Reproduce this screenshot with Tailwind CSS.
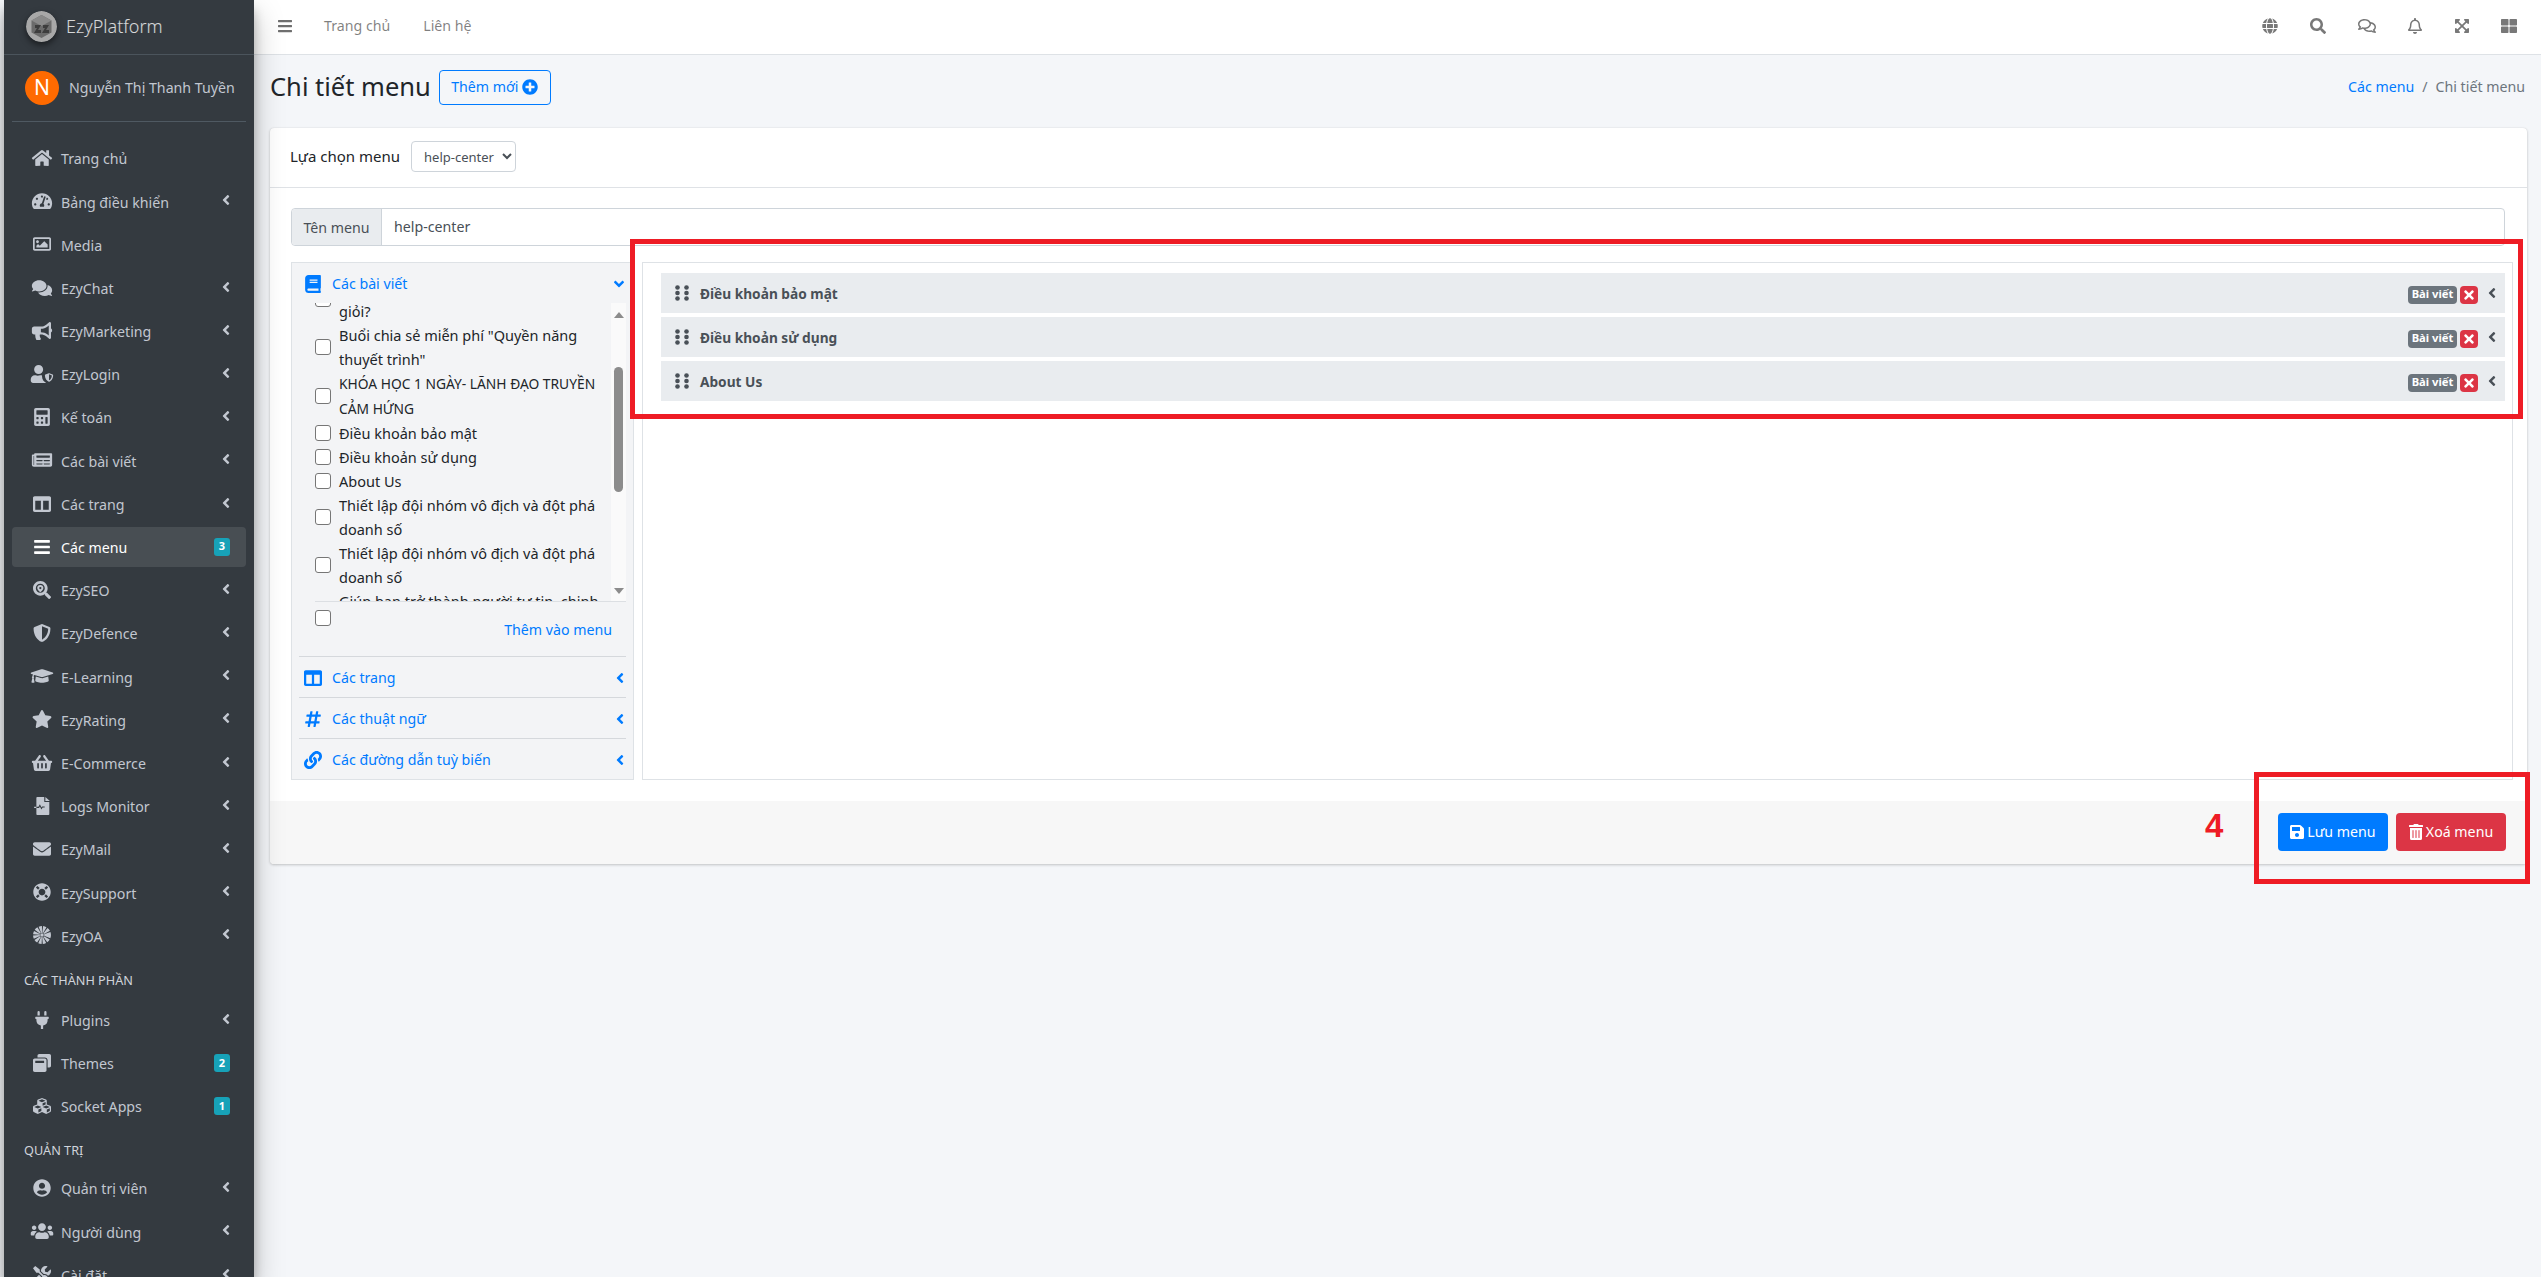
<!DOCTYPE html>
<html lang="vi">
<head>
<meta charset="UTF-8">
<title>Chi tiết menu</title>
<script src="https://cdn.jsdelivr.net/npm/@tailwindcss/browser@4"></script>
</head>
<body class="relative h-[1277px] overflow-hidden bg-[#f4f6f9] font-['Noto_Sans',sans-serif] text-[14.2px] text-[#212529]">

<!-- icon sprites -->
<svg class="hidden" xmlns="http://www.w3.org/2000/svg">
<symbol id="home" viewBox="0 0 576 512"><path d="M280.37 148.26L96 300.11V464a16 16 0 0 0 16 16l112.06-.29a16 16 0 0 0 15.92-16V368a16 16 0 0 1 16-16h64a16 16 0 0 1 16 16v95.64a16 16 0 0 0 16 16.05L464 480a16 16 0 0 0 16-16V300L295.67 148.26a12.19 12.19 0 0 0-15.3 0zM571.6 251.47L488 182.56V44.05a12 12 0 0 0-12-12h-56a12 12 0 0 0-12 12v72.61L318.47 43a48 48 0 0 0-61 0L4.34 251.47a12 12 0 0 0-1.6 16.9l25.5 31A12 12 0 0 0 45.15 301l235.22-193.74a12.19 12.19 0 0 1 15.3 0L530.9 301a12 12 0 0 0 16.9-1.6l25.5-31a12 12 0 0 0-1.7-16.93z"/></symbol>
<symbol id="bars" viewBox="0 0 448 512"><path d="M16 132h416c8.837 0 16-7.163 16-16V76c0-8.837-7.163-16-16-16H16C7.163 60 0 67.163 0 76v40c0 8.837 7.163 16 16 16zm0 160h416c8.837 0 16-7.163 16-16v-40c0-8.837-7.163-16-16-16H16c-8.837 0-16 7.163-16 16v40c0 8.837 7.163 16 16 16zm0 160h416c8.837 0 16-7.163 16-16v-40c0-8.837-7.163-16-16-16H16c-8.837 0-16 7.163-16 16v40c0 8.837 7.163 16 16 16z"/></symbol>
<symbol id="left" viewBox="0 0 256 512"><path d="M31.7 239l136-136c9.4-9.4 24.6-9.4 33.9 0l22.6 22.6c9.4 9.4 9.4 24.6 0 33.9L127.9 256l96.4 96.4c9.4 9.4 9.4 24.6 0 33.9L201.7 409c-9.4 9.4-24.6 9.4-33.9 0l-136-136c-9.5-9.4-9.5-24.6-.1-34z"/></symbol>
<symbol id="down" viewBox="0 0 320 512"><path d="M143 352.3L7 216.3c-9.4-9.4-9.4-24.6 0-33.9l22.6-22.6c9.4-9.4 24.6-9.4 33.9 0l96.4 96.4 96.4-96.4c9.4-9.4 24.6-9.4 33.9 0l22.6 22.6c9.4 9.4 9.4 24.6 0 33.9l-136 136c-9.2 9.4-24.4 9.4-33.8 0z"/></symbol>
<symbol id="search" viewBox="0 0 512 512"><path d="M505 442.7L405.3 343c-4.5-4.5-10.6-7-17-7H372c27.6-35.3 44-79.7 44-128C416 93.1 322.9 0 208 0S0 93.1 0 208s93.1 208 208 208c48.3 0 92.7-16.4 128-44v16.3c0 6.4 2.5 12.5 7 17l99.7 99.7c9.4 9.4 24.6 9.4 33.9 0l28.3-28.3c9.4-9.4 9.4-24.6.1-34zM208 336c-70.7 0-128-57.2-128-128 0-70.7 57.2-128 128-128 70.7 0 128 57.2 128 128 0 70.7-57.2 128-128 128z"/></symbol>
<symbol id="seo" viewBox="0 0 512 512"><path d="M505 442.7L405.3 343c-4.5-4.5-10.6-7-17-7H372c27.6-35.3 44-79.7 44-128C416 93.1 322.9 0 208 0S0 93.1 0 208s93.1 208 208 208c48.3 0 92.7-16.4 128-44v16.3c0 6.4 2.5 12.5 7 17l99.7 99.7c9.4 9.4 24.6 9.4 33.9 0l28.3-28.3c9.4-9.4 9.4-24.6.1-34zM208 336c-70.7 0-128-57.2-128-128 0-70.7 57.2-128 128-128 70.7 0 128 57.2 128 128 0 70.7-57.2 128-128 128z"/><path d="M208 112c-50 0-88 38-88 84 0 40 60 100 88 124 28-24 88-84 88-124 0-46-38-84-88-84zm0 120a32 32 0 1 1 0-64 32 32 0 0 1 0 64z"/></symbol>
<symbol id="plus" viewBox="0 0 512 512"><path d="M256 8C119 8 8 119 8 256s111 248 248 248 248-111 248-248S393 8 256 8zm144 276c0 6.6-5.4 12-12 12h-92v92c0 6.6-5.4 12-12 12h-56c-6.6 0-12-5.4-12-12v-92h-92c-6.6 0-12-5.4-12-12v-56c0-6.6 5.4-12 12-12h92v-92c0-6.6 5.4-12 12-12h56c6.6 0 12 5.4 12 12v92h92c6.6 0 12 5.4 12 12v56z"/></symbol>
<symbol id="times" viewBox="0 0 352 512"><path d="M242.72 256l100.07-100.07c12.28-12.28 12.28-32.19 0-44.48l-22.24-22.24c-12.28-12.28-32.19-12.28-44.48 0L176 189.28 75.93 89.21c-12.28-12.28-32.19-12.28-44.48 0L9.21 111.45c-12.28 12.28-12.28 32.19 0 44.48L109.28 256 9.21 356.07c-12.28 12.28-12.28 32.19 0 44.48l22.24 22.24c12.28 12.28 32.2 12.28 44.48 0L176 322.72l100.07 100.07c12.28 12.28 32.2 12.28 44.48 0l22.24-22.24c12.28-12.28 12.28-32.19 0-44.48L242.72 256z"/></symbol>
<symbol id="trash" viewBox="0 0 448 512"><path d="M32 464a48 48 0 0 0 48 48h288a48 48 0 0 0 48-48V128H32zm272-256a16 16 0 0 1 32 0v224a16 16 0 0 1-32 0zm-96 0a16 16 0 0 1 32 0v224a16 16 0 0 1-32 0zm-96 0a16 16 0 0 1 32 0v224a16 16 0 0 1-32 0zM432 32H312l-9.4-18.7A24 24 0 0 0 281.1 0H166.8a23.72 23.72 0 0 0-21.4 13.3L136 32H16A16 16 0 0 0 0 48v32a16 16 0 0 0 16 16h416a16 16 0 0 0 16-16V48a16 16 0 0 0-16-16z"/></symbol>
<symbol id="save" viewBox="0 0 448 512"><path d="M433.941 129.941l-83.882-83.882A48 48 0 0 0 316.118 32H48C21.49 32 0 53.49 0 80v352c0 26.51 21.49 48 48 48h352c26.51 0 48-21.49 48-48V163.882a48 48 0 0 0-14.059-33.941zM224 416c-35.346 0-64-28.654-64-64 0-35.346 28.654-64 64-64s64 28.654 64 64c0 35.346-28.654 64-64 64zm96-304.52V212c0 6.627-5.373 12-12 12H76c-6.627 0-12-5.373-12-12V108c0-6.627 5.373-12 12-12h228.52c3.183 0 6.235 1.264 8.485 3.515l3.48 3.48A11.996 11.996 0 0 1 320 111.48z"/></symbol>
<symbol id="star" viewBox="0 0 576 512"><path d="M259.3 17.8L194 150.2 47.9 171.5c-26.2 3.8-36.7 36.1-17.7 54.6l105.7 103-25 145.5c-4.5 26.3 23.2 46 46.4 33.7L288 439.6l130.7 68.7c23.2 12.2 50.9-7.4 46.4-33.7l-25-145.5 105.7-103c19-18.5 8.5-50.8-17.7-54.6L382 150.2 316.7 17.8c-11.7-23.6-45.6-23.9-57.4 0z"/></symbol>
<symbol id="usercircle" viewBox="0 0 496 512"><path d="M248 8C111 8 0 119 0 256s111 248 248 248 248-111 248-248S385 8 248 8zm0 96c48.6 0 88 39.4 88 88s-39.4 88-88 88-88-39.4-88-88 39.4-88 88-88zm0 344c-58.7 0-111.3-26.6-146.5-68.2 18.8-35.4 55.6-59.8 98.5-59.8 2.4 0 4.8.4 7.1 1.1 13 4.2 26.6 6.9 40.9 6.9 14.3 0 28-2.7 40.9-6.9 2.3-.7 4.7-1.1 7.1-1.1 42.9 0 79.7 24.4 98.5 59.8C359.3 421.4 306.7 448 248 448z"/></symbol>
<symbol id="users" viewBox="0 0 640 512"><path d="M96 224c35.3 0 64-28.7 64-64s-28.7-64-64-64-64 28.7-64 64 28.7 64 64 64zm448 0c35.3 0 64-28.7 64-64s-28.7-64-64-64-64 28.7-64 64 28.7 64 64 64zm32 32h-64c-17.6 0-33.5 7.1-45.1 18.6 40.3 22.1 68.9 62 75.1 109.4h66c17.7 0 32-14.3 32-32v-32c0-35.3-28.7-64-64-64zm-256 0c61.9 0 112-50.1 112-112S381.9 32 320 32 208 82.1 208 144s50.1 112 112 112zm76.8 32h-8.3c-20.8 10-43.9 16-68.5 16s-47.6-6-68.5-16h-8.3C179.6 288 128 339.6 128 403.2V432c0 26.5 21.5 48 48 48h288c26.5 0 48-21.5 48-48v-28.8c0-63.6-51.6-115.2-115.2-115.2zm-223.7-13.4C161.5 263.1 145.6 256 128 256H64c-35.3 0-64 28.7-64 64v32c0 17.7 14.3 32 32 32h65.9c6.3-47.4 34.9-87.3 75.2-109.4z"/></symbol>
<symbol id="hash" viewBox="0 0 448 512"><path d="M440.667 182.109l7.143-40c1.313-7.355-4.342-14.109-11.813-14.109h-74.81l14.623-81.891C377.123 38.754 371.468 32 363.997 32h-40.632a12 12 0 0 0-11.813 9.891L296.175 128H197.54l14.623-81.891C213.477 38.754 207.822 32 200.35 32h-40.632a12 12 0 0 0-11.813 9.891L132.528 128H53.432a12 12 0 0 0-11.813 9.891l-7.143 40C33.163 185.246 38.818 192 46.289 192h74.81L98.242 320H19.146a12 12 0 0 0-11.813 9.891l-7.143 40C-1.123 377.246 4.532 384 12.003 384h74.81L72.19 465.891C70.877 473.246 76.532 480 84.003 480h40.632a12 12 0 0 0 11.813-9.891L151.826 384h98.634l-14.623 81.891C234.523 473.246 240.178 480 247.65 480h40.632a12 12 0 0 0 11.813-9.891L315.472 384h79.096a12 12 0 0 0 11.813-9.891l7.143-40c1.313-7.355-4.342-14.109-11.813-14.109h-74.81l22.857-128h79.096a12 12 0 0 0 11.813-9.891zM261.889 320h-98.634l22.857-128h98.634l-22.857 128z"/></symbol>
<symbol id="link" viewBox="0 0 512 512"><path d="M326.612 185.391c59.747 59.809 58.927 155.698.36 214.59-.11.12-.24.25-.36.37l-67.2 67.2c-59.27 59.27-155.699 59.262-214.96 0-59.27-59.26-59.27-155.7 0-214.96l37.106-37.106c9.84-9.84 26.786-3.3 27.294 10.606.648 17.722 3.826 35.527 9.69 52.721 1.986 5.822.567 12.262-3.783 16.612l-13.087 13.087c-28.026 28.026-28.905 73.66-1.155 101.96 28.024 28.579 74.086 28.749 102.325.51l67.2-67.19c28.191-28.191 28.073-73.757 0-101.83-3.701-3.694-7.429-6.564-10.341-8.569a16.037 16.037 0 0 1-6.947-12.606c-.396-10.567 3.348-21.456 11.698-29.806l21.054-21.055c5.521-5.521 14.182-6.199 20.584-1.731a152.482 152.482 0 0 1 20.522 17.197zM467.547 44.449c-59.261-59.262-155.69-59.27-214.96 0l-67.2 67.2c-.12.12-.25.25-.36.37-58.566 58.892-59.387 154.781.36 214.59a152.454 152.454 0 0 0 20.521 17.196c6.402 4.468 15.064 3.789 20.584-1.731l21.054-21.055c8.35-8.35 12.094-19.239 11.698-29.806a16.037 16.037 0 0 0-6.947-12.606c-2.912-2.005-6.64-4.875-10.341-8.569-28.073-28.073-28.191-73.639 0-101.83l67.2-67.19c28.239-28.239 74.3-28.069 102.325.51 27.75 28.3 26.872 73.934-1.155 101.96l-13.087 13.087c-4.35 4.35-5.769 10.79-3.783 16.612 5.864 17.194 9.042 34.999 9.69 52.721.509 13.906 17.454 20.446 27.294 10.606l37.106-37.106c59.271-59.259 59.271-155.699.001-214.959z"/></symbol>
<symbol id="book" viewBox="0 0 448 512"><path d="M448 360V24c0-13.3-10.7-24-24-24H96C43 0 0 43 0 96v320c0 53 43 96 96 96h328c13.3 0 24-10.7 24-24v-16c0-7.5-3.5-14.3-8.9-18.7-4.2-15.4-4.2-59.3 0-74.7 5.4-4.3 8.9-11.1 8.9-18.6zM128 134c0-3.3 2.7-6 6-6h212c3.3 0 6 2.7 6 6v20c0 3.3-2.7 6-6 6H134c-3.3 0-6-2.7-6-6v-20zm0 64c0-3.3 2.7-6 6-6h212c3.3 0 6 2.7 6 6v20c0 3.3-2.7 6-6 6H134c-3.3 0-6-2.7-6-6v-20zm253.4 250H96c-17.7 0-32-14.3-32-32 0-17.6 14.4-32 32-32h285.4c-1.9 17.1-1.9 46.9 0 64z"/></symbol>
<symbol id="columns" viewBox="0 0 512 512"><path d="M464 32H48C21.49 32 0 53.49 0 80v352c0 26.51 21.49 48 48 48h416c26.51 0 48-21.49 48-48V80c0-26.51-21.49-48-48-48zM224 416H64V160h160v256zm224 0H288V160h160v256z"/></symbol>
<symbol id="envelope" viewBox="0 0 512 512"><path d="M502.3 190.8c3.9-3.1 9.7-.2 9.7 4.7V400c0 26.5-21.5 48-48 48H48c-26.5 0-48-21.5-48-48V195.6c0-5 5.7-7.8 9.7-4.7 22.4 17.4 52.1 39.5 154.1 113.6 21.1 15.4 56.7 47.8 92.2 47.6 35.7.3 72-32.8 92.3-47.6 102-74.1 131.6-96.3 154-113.7zM256 320c23.2.4 56.6-29.2 73.4-41.4 132.7-96.3 142.8-104.7 173.4-128.7 5.8-4.5 9.2-11.5 9.2-18.9v-19c0-26.5-21.5-48-48-48H48C21.5 64 0 85.5 0 112v19c0 7.4 3.4 14.3 9.2 18.9 30.6 23.9 40.7 32.4 173.4 128.7 16.8 12.2 50.2 41.8 73.4 41.4z"/></symbol>
<symbol id="calc" viewBox="0 0 448 512"><path d="M400 0H48C22.4 0 0 22.4 0 48v416c0 25.6 22.4 48 48 48h352c25.6 0 48-22.4 48-48V48c0-25.6-22.4-48-48-48zM128 435.2c0 6.4-6.4 12.8-12.8 12.8H76.8c-6.4 0-12.8-6.4-12.8-12.8v-38.4c0-6.4 6.4-12.8 12.8-12.8h38.4c6.4 0 12.8 6.4 12.8 12.8v38.4zm0-128c0 6.4-6.4 12.8-12.8 12.8H76.8c-6.4 0-12.8-6.4-12.8-12.8v-38.4c0-6.4 6.4-12.8 12.8-12.8h38.4c6.4 0 12.8 6.4 12.8 12.8v38.4zm128 128c0 6.4-6.4 12.8-12.8 12.8h-38.4c-6.4 0-12.8-6.4-12.8-12.8v-38.4c0-6.4 6.4-12.8 12.8-12.8h38.4c6.4 0 12.8 6.4 12.8 12.8v38.4zm0-128c0 6.4-6.4 12.8-12.8 12.8h-38.4c-6.4 0-12.8-6.4-12.8-12.8v-38.4c0-6.4 6.4-12.8 12.8-12.8h38.4c6.4 0 12.8 6.4 12.8 12.8v38.4zm128 128c0 6.4-6.4 12.8-12.8 12.8h-38.4c-6.4 0-12.8-6.4-12.8-12.8V268.8c0-6.4 6.4-12.8 12.8-12.8h38.4c6.4 0 12.8 6.4 12.8 12.8v166.4zm0-256c0 6.4-6.4 12.8-12.8 12.8H76.8c-6.4 0-12.8-6.4-12.8-12.8V76.8C64 70.4 70.4 64 76.8 64h294.4c6.4 0 12.8 6.4 12.8 12.8v102.4z"/></symbol>
<symbol id="image" viewBox="0 0 512 512"><path d="M464 64H48C21.49 64 0 85.49 0 112v288c0 26.51 21.49 48 48 48h416c26.51 0 48-21.49 48-48V112c0-26.51-21.49-48-48-48zm-6 336H54a6 6 0 0 1-6-6V118a6 6 0 0 1 6-6h404a6 6 0 0 1 6 6v276a6 6 0 0 1-6 6zM128 152c-22.091 0-40 17.909-40 40s17.909 40 40 40 40-17.909 40-40-17.909-40-40-40zM96 352h320v-80l-87.515-87.515c-4.686-4.686-12.284-4.686-16.971 0L192 304l-39.515-39.515c-4.686-4.686-12.284-4.686-16.971 0L96 304v48z"/></symbol>
<symbol id="comments" viewBox="0 0 576 512"><path d="M416 192c0-88.4-93.1-160-208-160S0 103.6 0 192c0 34.3 14.1 65.9 38 92-13.4 30.2-35.5 54.2-35.8 54.5-2.2 2.3-2.8 5.7-1.5 8.7S4.8 352 8 352c36.6 0 66.9-12.3 88.7-25 32.2 15.7 70.3 25 111.3 25 114.9 0 208-71.6 208-160zm122 220c23.9-26 38-57.7 38-92 0-66.9-53.5-124.2-129.3-148.1.9 6.6 1.3 13.3 1.3 20.1 0 105.9-107.7 192-240 192-10.8 0-21.3-.8-31.7-1.9C207.8 439.6 281.8 480 368 480c41 0 79.1-9.2 111.3-25 21.8 12.7 52.1 25 88.7 25 3.2 0 6.1-1.9 7.3-4.8 1.3-2.9.7-6.3-1.5-8.7-.3-.3-22.4-24.2-35.8-54.5z"/></symbol>
<symbol id="comments-o" viewBox="0 0 576 512"><path d="M532 386.2c27.5-27.1 44-61.1 44-98.2 0-80-76.5-146.1-176.2-157.9C368.3 72.5 294.3 32 208 32 93.1 32 0 103.6 0 192c0 37 16.5 71 44 98.2-15.3 30.7-37.3 54.5-37.7 54.9-6.3 6.7-8.1 16.5-4.4 25 3.6 8.5 12 14 21.2 14 53.5 0 96.7-20.2 125.2-38.8 9.2 2.1 18.7 3.7 28.4 4.9C208.1 407.6 281.8 448 368 448c20.8 0 40.8-2.4 59.8-6.8C456.3 459.7 499.4 480 553 480c9.2 0 17.5-5.5 21.2-14 3.6-8.5 1.9-18.3-4.4-25-.4-.3-22.5-24.1-37.8-54.8zm-392.8-92.3L122.1 305c-14.1 9.1-28.5 16.3-43.1 21.4 2.7-4.7 5.4-9.7 8-14.8l15.5-31.1L77.7 256C64.2 242.6 48 220.7 48 192c0-60.7 73.3-112 160-112s160 51.3 160 112-73.3 112-160 112c-16.5 0-33-1.9-49-5.6l-19.8-4.5zM498.3 352l-24.7 24.4 15.5 31.1c2.6 5.1 5.3 10.1 8 14.8-14.6-5.1-29-12.3-43.1-21.4l-17.1-11.1-19.9 4.6c-16 3.7-32.5 5.6-49 5.6-54 0-102.2-20.1-131.3-49.7C338 339.5 416 272.9 416 192c0-3.4-.4-6.7-.7-10C479.7 196.5 528 238.8 528 288c0 28.7-16.2 50.6-29.7 64z"/></symbol>
<symbol id="bullhorn" viewBox="0 0 576 512"><path d="M576 240c0-23.63-12.95-44.04-32-55.12V32.01C544 23.26 537.02 0 512 0c-7.12 0-14.19 2.38-19.98 7.02l-85.03 68.03C364.28 109.19 310.66 128 256 128H64c-35.35 0-64 28.65-64 64v96c0 35.35 28.65 64 64 64h33.7c-1.39 10.48-2.18 21.14-2.18 32 0 39.77 9.26 77.35 25.56 110.94 5.19 10.69 16.52 17.06 28.4 17.06h74.28c26.05 0 41.69-29.84 25.9-50.56-16.4-21.52-26.15-48.36-26.15-77.44 0-11.11 1.62-21.79 4.41-32H256c54.66 0 108.28 18.81 150.98 52.95l85.03 68.03a32.023 32.023 0 0 0 19.98 7.02c24.92 0 32-22.78 32-32V295.13C563.05 284.04 576 263.63 576 240zm-96 141.42l-33.05-26.44C392.95 311.78 325.12 288 256 288v-96c69.12 0 136.95-23.78 190.95-66.98L480 98.58v282.84z"/></symbol>
<symbol id="cap" viewBox="0 0 640 512"><path d="M622.34 153.2L343.4 67.5c-15.2-4.67-31.6-4.67-46.79 0L17.66 153.2c-23.54 7.23-23.54 38.36 0 45.59l48.63 14.94c-10.67 13.19-17.23 29.28-17.88 46.9C38.78 266.15 32 276.11 32 288c0 10.78 5.68 19.85 13.86 25.65L20.33 428.53C18.11 438.52 25.71 448 35.94 448h56.11c10.24 0 17.84-9.48 15.62-19.47L82.14 313.65C90.32 307.85 96 298.78 96 288c0-11.57-6.47-21.25-15.66-26.87.76-15.02 8.44-28.3 20.69-36.72L296.6 284.5c9.06 2.78 26.44 6.25 46.79 0l278.95-85.7c23.55-7.24 23.55-38.36 0-45.6zM352.79 315.09c-28.53 8.76-52.84 3.92-65.59 0l-145.02-44.55L128 384c0 35.35 85.96 64 192 64s192-28.65 192-64l-14.18-113.47-145.03 44.56z"/></symbol>
<symbol id="news" viewBox="0 0 576 512"><path d="M552 64H88c-13.255 0-24 10.745-24 24v8H24c-13.255 0-24 10.745-24 24v272c0 30.928 25.072 56 56 56h472c26.51 0 48-21.49 48-48V88c0-13.255-10.745-24-24-24zM56 400a8 8 0 0 1-8-8V144h16v248a8 8 0 0 1-8 8zm236-16H140c-6.627 0-12-5.373-12-12v-8c0-6.627 5.373-12 12-12h152c6.627 0 12 5.373 12 12v8c0 6.627-5.373 12-12 12zm208 0H348c-6.627 0-12-5.373-12-12v-8c0-6.627 5.373-12 12-12h152c6.627 0 12 5.373 12 12v8c0 6.627-5.373 12-12 12zm-208-96H140c-6.627 0-12-5.373-12-12v-8c0-6.627 5.373-12 12-12h152c6.627 0 12 5.373 12 12v8c0 6.627-5.373 12-12 12zm208 0H348c-6.627 0-12-5.373-12-12v-8c0-6.627 5.373-12 12-12h152c6.627 0 12 5.373 12 12v8c0 6.627-5.373 12-12 12zm0-96H140c-6.627 0-12-5.373-12-12v-40c0-6.627 5.373-12 12-12h360c6.627 0 12 5.373 12 12v40c0 6.627-5.373 12-12 12z"/></symbol>
<symbol id="gauge" viewBox="0 0 576 512"><path d="M288 32C128.94 32 0 160.94 0 320c0 52.8 14.25 102.26 39.06 144.8 5.61 9.62 16.3 15.2 27.44 15.2h443c11.14 0 21.83-5.58 27.44-15.2C561.75 422.26 576 372.8 576 320c0-159.06-128.94-288-288-288zm0 64c14.71 0 26.58 10.13 30.32 23.65-1.11 2.26-2.64 4.23-3.45 6.67l-9.22 27.67c-5.13 3.49-10.97 6.01-17.64 6.01-17.67 0-32-14.33-32-32S270.33 96 288 96zM96 384c-17.67 0-32-14.33-32-32s14.33-32 32-32 32 14.33 32 32-14.33 32-32 32zm48-160c-17.67 0-32-14.33-32-32s14.33-32 32-32 32 14.33 32 32-14.33 32-32 32zm246.77-72.41l-61.33 184C343.13 347.33 352 364.54 352 384c0 11.72-3.38 22.55-8.88 32H232.88c-5.5-9.45-8.88-20.28-8.88-32 0-33.94 26.5-61.43 59.9-63.59l61.34-184.01c4.17-12.56 17.73-19.45 30.36-15.17 12.57 4.19 19.35 17.79 15.17 30.36zm14.66 57.2l15.52-46.55c3.47-1.29 7.13-2.23 11.05-2.23 17.67 0 32 14.33 32 32s-14.33 32-32 32c-11.38-.01-20.89-6.28-26.57-15.22zM480 384c-17.67 0-32-14.33-32-32s14.33-32 32-32 32 14.33 32 32-14.33 32-32 32z"/></symbol>
<symbol id="basket" viewBox="0 0 576 512"><path d="M576 216v16c0 13.255-10.745 24-24 24h-8l-26.113 182.788C514.509 462.435 494.257 480 470.37 480H105.63c-23.887 0-44.139-17.565-47.518-41.212L32 256h-8c-13.255 0-24-10.745-24-24v-16c0-13.255 10.745-24 24-24h67.341l106.78-146.821c10.395-14.292 30.407-17.453 44.701-7.058 14.293 10.395 17.453 30.408 7.058 44.701L170.477 192h235.046L326.12 82.821c-10.395-14.292-7.234-34.306 7.059-44.701 14.291-10.395 34.306-7.235 44.701 7.058L484.659 192H552c13.255 0 24 10.745 24 24zM312 392V280c0-13.255-10.745-24-24-24s-24 10.745-24 24v112c0 13.255 10.745 24 24 24s24-10.745 24-24zm112 0V280c0-13.255-10.745-24-24-24s-24 10.745-24 24v112c0 13.255 10.745 24 24 24s24-10.745 24-24zm-224 0V280c0-13.255-10.745-24-24-24s-24 10.745-24 24v112c0 13.255 10.745 24 24 24s24-10.745 24-24z"/></symbol>
<symbol id="plug" viewBox="0 0 384 512"><path d="M320,32a32,32,0,0,0-64,0v96h64Zm48,128H16A16,16,0,0,0,0,176v32a16,16,0,0,0,16,16H32v32A160.07,160.07,0,0,0,160,412.8V512h64V412.8A160.07,160.07,0,0,0,352,256V224h16a16,16,0,0,0,16-16V176A16,16,0,0,0,368,160ZM128,32a32,32,0,0,0-64,0v96h64Z"/></symbol>
<symbol id="ring" viewBox="0 0 512 512"><path d="M256 8C119.033 8 8 119.033 8 256s111.033 248 248 248 248-111.033 248-248S392.967 8 256 8zm173.696 119.559l-63.399 63.399c-10.987-18.559-26.67-34.252-45.255-45.255l63.399-63.399a218.396 218.396 0 0 1 45.255 45.255zM256 352c-53.019 0-96-42.981-96-96s42.981-96 96-96 96 42.981 96 96-42.981 96-96 96zM127.559 82.304l63.399 63.399c-18.559 10.987-34.252 26.67-45.255 45.255l-63.399-63.399a218.372 218.372 0 0 1 45.255-45.255zM82.304 384.441l63.399-63.399c10.987 18.559 26.67 34.252 45.255 45.255l-63.399 63.399a218.396 218.396 0 0 1-45.255-45.255zm302.137 45.255l-63.399-63.399c18.559-10.987 34.252-26.67 45.255-45.255l63.399 63.399a218.403 218.403 0 0 1-45.255 45.255z"/></symbol>
<symbol id="cubes" viewBox="0 0 512 512"><path d="M488.6 250.2L392 214V105.5c0-15-9.3-28.4-23.4-33.7l-100-37.5c-8.1-3.1-17.1-3.1-25.3 0l-100 37.5c-14.1 5.3-23.4 18.7-23.4 33.7V214l-96.6 36.2C9.3 255.5 0 268.9 0 283.9V394c0 13.6 7.7 26.1 19.9 32.2l100 50c10.1 5.1 22.1 5.1 32.2 0l103.9-52 103.9 52c10.1 5.1 22.1 5.1 32.2 0l100-50c12.2-6.1 19.9-18.6 19.9-32.2V283.9c0-15-9.3-28.4-23.4-33.7zM358 214.8l-85 31.9v-68.2l85-37v73.3zM154 104.1l102-38.2 102 38.2v.6l-102 41.4-102-41.4v-.6zm84 291.1l-85 42.5v-79.1l85-38.8v75.4zm0-112l-102 41.4-102-41.4v-.6l102-38.2 102 38.2v.6zm240 112l-85 42.5v-79.1l85-38.8v75.4zm0-112l-102 41.4-102-41.4v-.6l102-38.2 102 38.2v.6z"/></symbol>
<symbol id="globe" viewBox="0 0 496 512"><path d="M336.5 160C322 70.7 287.8 8 248 8s-74 62.7-88.5 152h177zM152 256c0 22.2 1.2 43.5 3.3 64h185.3c2.1-20.5 3.3-41.8 3.3-64s-1.2-43.5-3.3-64H155.3c-2.1 20.5-3.3 41.8-3.3 64zm324.7-96c-28.6-67.9-86.5-120.4-158-141.6 24.4 33.8 41.2 84.7 50 141.6h108zM177.2 18.4C105.8 39.6 47.8 92.1 19.3 160h108c8.7-56.9 25.5-107.8 49.9-141.6zM487.4 192H372.7c2.1 21 3.3 42.5 3.3 64s-1.2 43-3.3 64h114.6c5.5-20.5 8.6-41.8 8.6-64s-3.1-43.5-8.5-64zM120 256c0-21.5 1.2-43 3.3-64H8.6C3.2 212.5 0 233.8 0 256s3.2 43.5 8.6 64h114.6c-2-21-3.2-42.5-3.2-64zm39.5 96c14.5 89.3 48.7 152 88.5 152s74-62.7 88.5-152h-177zm159.3 141.6c71.4-21.2 129.4-73.7 158-141.6h-108c-8.8 56.9-25.6 107.8-50 141.6zM19.3 352c28.6 67.9 86.5 120.4 158 141.6-24.4-33.8-41.2-84.7-50-141.6h-108z"/></symbol>
<symbol id="bell" viewBox="0 0 448 512"><path d="M439.39 362.29c-19.32-20.76-55.47-51.99-55.47-154.29 0-77.7-54.48-139.9-127.94-155.16V32c0-17.67-14.32-32-31.98-32s-31.98 14.33-31.98 32v20.84C118.56 68.1 64.08 130.3 64.08 208c0 102.3-36.15 133.53-55.47 154.29-6 6.45-8.66 14.16-8.61 21.71.11 16.4 12.98 32 32.1 32h383.8c19.12 0 32-15.6 32.1-32 .05-7.55-2.61-15.27-8.61-21.71zM67.53 368c21.22-27.97 44.42-74.33 44.53-159.42 0-.2-.06-.38-.06-.58 0-61.86 50.14-112 112-112s112 50.14 112 112c0 .2-.06.38-.06.58.11 85.1 23.31 131.46 44.53 159.42H67.53zM224 512c35.32 0 63.97-28.65 63.97-64H160.03c0 35.35 28.65 64 63.97 64z"/></symbol>
<symbol id="expand" viewBox="0 0 448 512"><path d="M448 344v112a23.94 23.94 0 0 1-24 24H312c-21.39 0-32.09-25.9-17-41l36.2-36.2L224 295.6 116.77 402.9 153 439c15.09 15.1 4.39 41-17 41H24a23.94 23.94 0 0 1-24-24V344c0-21.4 25.89-32.1 41-17l36.19 36.2L184.46 256 77.18 148.7 41 185c-15.1 15.1-41 4.4-41-17V56a23.94 23.94 0 0 1 24-24h112c21.39 0 32.09 25.9 17 41l-36.2 36.2L224 216.4l107.23-107.3L295 73c-15.09-15.1-4.39-41 17-41h112a23.94 23.94 0 0 1 24 24v112c0 21.4-25.89 32.1-41 17l-36.19-36.2L263.54 256l107.28 107.3L407 327.1c15.1-15.2 41-4.5 41 16.9z"/></symbol>
<symbol id="grid" viewBox="0 0 512 512"><path d="M296 32h192c13.255 0 24 10.745 24 24v160c0 13.255-10.745 24-24 24H296c-13.255 0-24-10.745-24-24V56c0-13.255 10.745-24 24-24zm-80 0H24C10.745 32 0 42.745 0 56v160c0 13.255 10.745 24 24 24h192c13.255 0 24-10.745 24-24V56c0-13.255-10.745-24-24-24zM0 296v160c0 13.255 10.745 24 24 24h192c13.255 0 24-10.745 24-24V296c0-13.255-10.745-24-24-24H24c-13.255 0-24 10.745-24 24zm296 184h192c13.255 0 24-10.745 24-24V296c0-13.255-10.745-24-24-24H296c-13.255 0-24 10.745-24 24v160c0 13.255 10.745 24 24 24z"/></symbol>
<symbol id="shield" viewBox="0 0 512 512"><path d="M466.5 83.7l-192-80a48.15 48.15 0 0 0-36.9 0l-192 80C27.7 91.1 16 108.6 16 128c0 198.5 114.5 335.7 221.5 380.3 11.8 4.9 25.1 4.9 36.9 0C360.1 472.6 496 349.3 496 128c0-19.4-11.7-36.9-29.5-44.3zM256.1 446.3l-.1-381 175.9 73.3c-3.3 151.4-82.1 261.1-175.8 307.7z"/></symbol>
<symbol id="usershield" viewBox="0 0 640 512"><path d="M224 256a128 128 0 1 0 0-256 128 128 0 0 0 0 256zm96 64c0-8 1-16 2-23-12-4-25-7-38-7h-17a174 174 0 0 1-134 0h-17C52 290 0 342 0 406v42c0 35 29 64 64 64h352c8 0 15-1 22-4-62-35-118-89-118-188z"/><path d="M622 270l-96-38c-4-1-9-1-13 0l-96 38c-9 4-15 12-15 22 0 95 55 161 111 185 4 2 9 2 13 0 45-19 111-78 111-185 0-10-6-18-15-22zM520 436V266l80 32c-2 72-38 118-80 138z"/></symbol>
<symbol id="filepulse" viewBox="0 0 448 512"><path d="M288 0v128c0 9 7 16 16 16h128v344c0 13-11 24-24 24H88c-13 0-24-11-24-24V312h76l24-44 44 88 34-56h58v-32h-74l-17 28-45-90-40 70H64V24C64 11 75 0 88 0h200zM320 0l128 112H320V0zM0 280h64v32H0v-32z"/></symbol>
<symbol id="restore" viewBox="0 0 512 512"><path d="M512 48v288c0 26.5-21.5 48-48 48h-48V176c0-44.1-35.9-80-80-80H128V48c0-26.5 21.5-48 48-48h288c26.5 0 48 21.5 48 48zM384 176v288c0 26.5-21.5 48-48 48H48c-26.5 0-48-21.5-48-48V176c0-26.5 21.5-48 48-48h288c26.5 0 48 21.5 48 48zm-68 28c0-6.6-5.4-12-12-12H76c-6.6 0-12 5.4-12 12v52h252v-52z"/></symbol>
<symbol id="tools" viewBox="0 0 512 512"><path d="M501.1 395.7L384 278.6c-23.1-23.1-57.6-27.6-85.4-13.9L192 158.1V96L64 0 0 64l96 128h62.1l106.6 106.6c-13.6 27.8-9.2 62.3 13.9 85.4l117.1 117.1c14.6 14.6 38.2 14.6 52.7 0l52.7-52.7c14.5-14.6 14.5-38.2 0-52.7zM331.7 225c28.3 0 54.9 11 74.9 31l19.4 19.4c15.8-6.9 30.8-16.5 43.8-29.5 37.1-37.1 49.7-89.3 37.9-136.7-2.2-9-13.5-12.1-20.1-5.5l-74.4 74.4-67.9-11.3L334 98.9l74.4-74.4c6.6-6.6 3.4-17.9-5.7-20.2-47.4-11.7-99.6.9-136.6 37.9-28.5 28.5-41.9 66.1-41.2 103.6l82.1 82.1c8.1-1.9 16.5-2.9 24.7-2.9zm-103.9 82l-56.7-56.7L18.7 402.8c-25 25-25 65.5 0 90.5s65.5 25 90.5 0l123.6-123.6c-7.6-19.9-9.9-41.6-5-62.7zM64 472c-13.2 0-24-10.8-24-24 0-13.3 10.7-24 24-24s24 10.7 24 24c0 13.2-10.7 24-24 24z"/></symbol>
<symbol id="burst" viewBox="0 0 512 512"><circle cx="256" cy="256" r="160" fill="none" stroke="currentColor" stroke-width="190" stroke-dasharray="62 22"/><circle cx="256" cy="256" r="50"/></symbol>
<symbol id="grip" viewBox="0 0 14 16"><circle cx="2.5" cy="2.5" r="2.3"/><circle cx="11.5" cy="2.5" r="2.3"/><circle cx="2.5" cy="8" r="2.3"/><circle cx="11.5" cy="8" r="2.3"/><circle cx="2.5" cy="13.5" r="2.3"/><circle cx="11.5" cy="13.5" r="2.3"/></symbol>
</svg>

<div class="flex h-full">
  <!-- Sidebar -->
  <aside class="relative z-10 ml-[4px] w-[250px] shrink-0 overflow-hidden bg-[#343a40] text-[#c2c7d0] shadow-[0_14px_28px_rgba(0,0,0,.25),0_10px_10px_rgba(0,0,0,.22)]">
    <div class="flex h-[55px] items-center border-b border-[#4b545c] pb-[2px] pl-[22px]">
      <svg class="h-[31px] w-[31px] rounded-full shadow-[0_3px_6px_rgba(0,0,0,.5)]" viewBox="0 0 31 31">
        <circle cx="15.5" cy="15.5" r="15.5" fill="#a8a8a8"/>
        <path d="M15.5 4l10 5.5v12L15.5 27l-10-5.5v-12z" fill="#6b6b6b"/>
        <path d="M15.5 4l10 5.5-10 5.5-10-5.5z" fill="#8a8a8a"/>
        <path d="M9 14h6l-3 5h3v3H8l3-5H9zM17 14h6l-3 5h3v3h-7l3-5h-2z" fill="#3d3d3d"/>
      </svg>
      <span class="ml-[9px] text-[18px] font-light text-white/80">EzyPlatform</span>
    </div>
    <div class="mx-2 flex h-[67px] items-center border-b border-[#4f5962] pl-[13px]">
      <div class="flex h-[34px] w-[34px] items-center justify-center rounded-full bg-[#ff6a00] text-[21px] text-white">N</div>
      <span class="ml-[10px] whitespace-nowrap">Nguyễn Thị Thanh Tuyền</span>
    </div>
    <nav id="nav" class="mt-[16px] px-2"></nav>
  </aside>

  <!-- Main -->
  <main class="min-w-0 flex-1">
    <header class="flex h-[55px] items-center border-b border-[#dee2e6] bg-white pb-[2px] pl-[24px] pr-[9px] text-black/50">
      <svg class="h-[16px] w-[14px] fill-[#6f6f6f]"><use href="#bars"/></svg>
      <a class="ml-[32px]">Trang chủ</a>
      <a class="ml-[33px]">Liên hệ</a>
      <div class="ml-auto flex items-center text-[#787878]">
        <span class="flex w-[48px] justify-center"><svg class="h-[16px] w-[16px] fill-current"><use href="#globe"/></svg></span>
        <span class="flex w-[48px] justify-center"><svg class="h-[16px] w-[16px] fill-current"><use href="#search"/></svg></span>
        <span class="flex w-[49px] justify-center"><svg class="h-[16px] w-[18px] fill-current"><use href="#comments-o"/></svg></span>
        <span class="flex w-[47px] justify-center"><svg class="h-[16px] w-[14px] fill-current"><use href="#bell"/></svg></span>
        <span class="flex w-[47px] justify-center"><svg class="h-[16px] w-[14px] fill-current"><use href="#expand"/></svg></span>
        <span class="flex w-[47px] justify-center"><svg class="h-[16px] w-[16px] fill-current"><use href="#grid"/></svg></span>
      </div>
    </header>

    <div class="flex h-[73px] items-center pb-[9px] pl-[16px] pr-[16px]">
      <h1 class="text-[25.5px] leading-none text-[#212529]">Chi tiết menu</h1>
      <button class="ml-[8px] flex h-[35px] w-[112px] items-center justify-center gap-[4px] rounded-[4px] border border-[#007bff] text-[#007bff]">Thêm mới<svg class="h-[16px] w-[16px] fill-current"><use href="#plus"/></svg></button>
      <div class="ml-auto flex items-center text-[#6c757d]">
        <a class="text-[#007bff]">Các menu</a><span class="mx-[8px]">/</span><span>Chi tiết menu</span>
      </div>
    </div>

    <!-- Card -->
    <section class="ml-[16px] mr-[14px] rounded-[4px] bg-white shadow-[0_0_1px_rgba(0,0,0,.125),0_1px_3px_rgba(0,0,0,.2)]">
      <div class="flex h-[60px] items-center border-b border-[#dfe2e6] pb-[2px] pl-[20px]">
        <label class="text-[15px]">Lựa chọn menu</label>
        <select class="ml-[11px] h-[31px] w-[105px] rounded-[4px] border border-[#ced4da] bg-white pl-[8px] text-[13px] text-[#495057]"><option>help-center</option></select>
      </div>
      <div class="px-[21px] pb-[21px] pt-[20px]">
        <div class="mr-px flex h-[38px] rounded-[4px] border border-[#ced4da]">
          <span class="flex w-[90px] items-center justify-center rounded-l-[4px] border-r border-[#ced4da] bg-[#e9ecef] pt-[1px] text-[#495057]">Tên menu</span>
          <input class="min-w-0 flex-1 pl-[12px] text-[#495057] outline-none" value="help-center">
        </div>
        <div class="-mr-[7px] mt-[16px] flex h-[518px] gap-[8px]">
          <!-- left panel -->
          <div class="flex w-[343px] shrink-0 flex-col border border-[#dee2e6] bg-[#f3f4f6] px-[7px]">
            <div class="flex h-[40px] shrink-0 items-center pt-[2px] text-[#007bff]">
              <svg class="ml-[6px] h-[18px] w-[16px] fill-current"><use href="#book"/></svg>
              <span class="ml-[11px] flex-1">Các bài viết</span>
              <svg class="mr-[2px] h-[16px] w-[10px] fill-current"><use href="#down"/></svg>
            </div>
            <div class="relative ml-[16px] h-[299px] shrink-0 overflow-hidden border-b border-[#dcdfe3] text-[14.5px] leading-[24px]">
              <div id="posts" class="-mt-[28px]"></div>
              <!-- scrollbar -->
              <div class="absolute right-0 top-0 flex h-full w-[15px] flex-col items-center bg-[#fafafa]">
                <div class="mt-[9px] h-0 w-0 border-x-[5px] border-b-[6px] border-x-transparent border-b-[#8c8c8c]"></div>
                <div class="mt-[49px] h-[125px] w-[9px] rounded-[5px] bg-[#8c8c8c]"></div>
                <div class="mt-[96px] h-0 w-0 border-x-[5px] border-t-[6px] border-x-transparent border-t-[#8c8c8c]"></div>
              </div>
            </div>
            <div class="flex h-[54px] shrink-0 items-start justify-between pl-[16px] pr-[14px] pt-[8px]">
              <input type="checkbox" class="h-[16px] w-[16px] appearance-none rounded-[3px] border border-[#767676] bg-white">
              <a class="mt-[9px] text-[#007bff]">Thêm vào menu</a>
            </div>
            <div class="flex h-[41px] shrink-0 items-center border-t border-[#d5d8dc] pt-[2px] text-[#007bff]">
              <svg class="ml-[5px] h-[18px] w-[18px] fill-current"><use href="#columns"/></svg>
              <span class="ml-[10px] flex-1">Các trang</span>
              <svg class="mr-[2px] h-[16px] w-[8px] fill-current"><use href="#left"/></svg>
            </div>
            <div class="flex h-[41px] shrink-0 items-center border-t border-[#d5d8dc] pt-[2px] text-[#007bff]">
              <svg class="ml-[5px] h-[18px] w-[18px] fill-current"><use href="#hash"/></svg>
              <span class="ml-[10px] flex-1">Các thuật ngữ</span>
              <svg class="mr-[2px] h-[16px] w-[8px] fill-current"><use href="#left"/></svg>
            </div>
            <div class="flex h-[41px] shrink-0 items-center border-t border-[#d5d8dc] pt-[2px] text-[#007bff]">
              <svg class="ml-[5px] h-[18px] w-[18px] fill-current"><use href="#link"/></svg>
              <span class="ml-[10px] flex-1">Các đường dẫn tuỳ biến</span>
              <svg class="mr-[2px] h-[16px] w-[8px] fill-current"><use href="#left"/></svg>
            </div>
          </div>
          <!-- right panel -->
          <div id="menuItems" class="flex min-w-0 flex-1 flex-col gap-[4px] border border-[#dee2e6] pl-[18px] pr-[7px] pt-[10px]"></div>
        </div>
      </div>
      <div class="flex h-[63px] items-start justify-end gap-[8px] rounded-b-[4px] bg-[#f7f7f7] pr-[21px] pt-[12px]">
        <button class="flex h-[38px] w-[110px] items-center justify-center gap-[3px] rounded-[4px] bg-[#007bff] text-white"><svg class="h-[16px] w-[14px] fill-current"><use href="#save"/></svg>Lưu menu</button>
        <button class="flex h-[38px] w-[110px] items-center justify-center gap-[3px] rounded-[4px] bg-[#dc3545] text-white"><svg class="h-[16px] w-[14px] fill-current"><use href="#trash"/></svg>Xoá menu</button>
      </div>
    </section>
  </main>
</div>

<!-- annotations drawn over the screenshot -->
<div class="absolute left-[630px] top-[239px] h-[180px] w-[1893px] border-[5px] border-[#ee1c25]"></div>
<div class="absolute left-[2254px] top-[772px] h-[112px] w-[276px] border-[5px] border-[#ee1c25]"></div>
<div class="absolute left-[2205px] top-[807px] font-['Liberation_Sans',sans-serif] text-[33px] font-bold leading-[38px] text-[#ee1c25]">4</div>

<script>
  // sidebar rows: [icon, label, badge] - no badge means a chevron, '' means nothing
  const rows = [
    ['home', 'Trang chủ', ''], ['gauge', 'Bảng điều khiển'], ['image', 'Media', ''], ['comments', 'EzyChat'],
    ['bullhorn', 'EzyMarketing'], ['usershield', 'EzyLogin'], ['calc', 'Kế toán'], ['news', 'Các bài viết'],
    ['columns', 'Các trang'], ['bars', 'Các menu', '3', true], ['seo', 'EzySEO'], ['shield', 'EzyDefence'],
    ['cap', 'E-Learning'], ['star', 'EzyRating'], ['basket', 'E-Commerce'], ['filepulse', 'Logs Monitor'],
    ['envelope', 'EzyMail'], ['ring', 'EzySupport'], ['burst', 'EzyOA'],
    'CÁC THÀNH PHẦN',
    ['plug', 'Plugins'], ['restore', 'Themes', '2'], ['cubes', 'Socket Apps', '1'],
    'QUẢN TRỊ',
    ['usercircle', 'Quản trị viên'], ['users', 'Người dùng'], ['tools', 'Cài đặt']
  ];
  document.getElementById('nav').innerHTML = rows.map(r => {
    if (typeof r === 'string') {
      const h = r === 'QUẢN TRỊ' ? 'h-[39px]' : 'h-[41px]';
      return `<div class="flex ${h} items-center pl-[12px] pt-[3px] text-[12.7px] text-[#d0d4db]">${r}</div>`;
    }
    const [icon, label, badge, active] = r;
    const right = badge === undefined
      ? `<svg class="h-[16px] w-[8px] -translate-y-[1px] fill-current"><use href="#left"/></svg>`
      : badge ? `<span class="flex h-[18px] w-[16px] items-center justify-center rounded-[3px] bg-[#17a2b8] text-[11px] font-bold text-white">${badge}</span>` : '';
    return `<a class="mb-[3.2px] flex h-[40px] items-center rounded-[4px] pl-[18px] pr-[16px] ${active ? 'bg-white/10 text-white' : ''}"><svg class="h-[18px] w-[24px] fill-current"><use href="#${icon}"/></svg><span class="ml-[7px] flex-1 pt-[2px]">${label}</span>${right}</a>`;
  }).join('');

  // post list in the left panel (scrolled part way down)
  const box = 'h-[16px] w-[16px] shrink-0 appearance-none rounded-[3px] border border-[#767676] bg-white';
  const posts = [
    'Làm sao để trở thành người bán hàng<br>giỏi?',
    'Buổi chia sẻ miễn phí "Quyền năng<br>thuyết trình"',
    '<span class="text-[13.8px]">KHÓA HỌC 1 NGÀY- LÃNH ĐẠO TRUYỀN<br>CẢM HỨNG</span>',
    'Điều khoản bảo mật', 'Điều khoản sử dụng', 'About Us',
    'Thiết lập đội nhóm vô địch và đột phá<br>doanh số',
    'Thiết lập đội nhóm vô địch và đột phá<br>doanh số',
    'Giúp bạn trở thành người tự tin, chinh'
  ];
  document.getElementById('posts').innerHTML = posts.map((p, i) =>
    `<label class="flex items-center gap-[8px] whitespace-nowrap">${i < 8 ? `<input type="checkbox" class="${box}">` : '<span class="w-[16px]"></span>'}<span>${p}</span></label>`
  ).join('');

  // items already in the menu
  document.getElementById('menuItems').innerHTML = ['Điều khoản bảo mật', 'Điều khoản sử dụng', 'About Us'].map(t => `
    <div class="flex h-[40px] items-center bg-[#e9ecef] pl-[14px] pr-[9px] font-bold text-[#495057]">
      <svg class="h-[16px] w-[14px] fill-current"><use href="#grip"/></svg>
      <span class="ml-[11px] flex-1 pt-[2px] text-[13.7px]">${t}</span>
      <span class="mt-[3px] flex h-[18px] w-[49px] items-center justify-center rounded-[4px] bg-[#6c757d] text-[11.2px] text-white">Bài viết</span>
      <span class="ml-[3px] mt-[3px] flex h-[18px] w-[18px] items-center justify-center rounded-[4px] bg-[#dc3545] text-white"><svg class="h-[14px] w-[10px] fill-current"><use href="#times"/></svg></span>
      <svg class="ml-[10px] h-[16px] w-[8px] fill-current"><use href="#left"/></svg>
    </div>`).join('');
</script>
</body>
</html>
